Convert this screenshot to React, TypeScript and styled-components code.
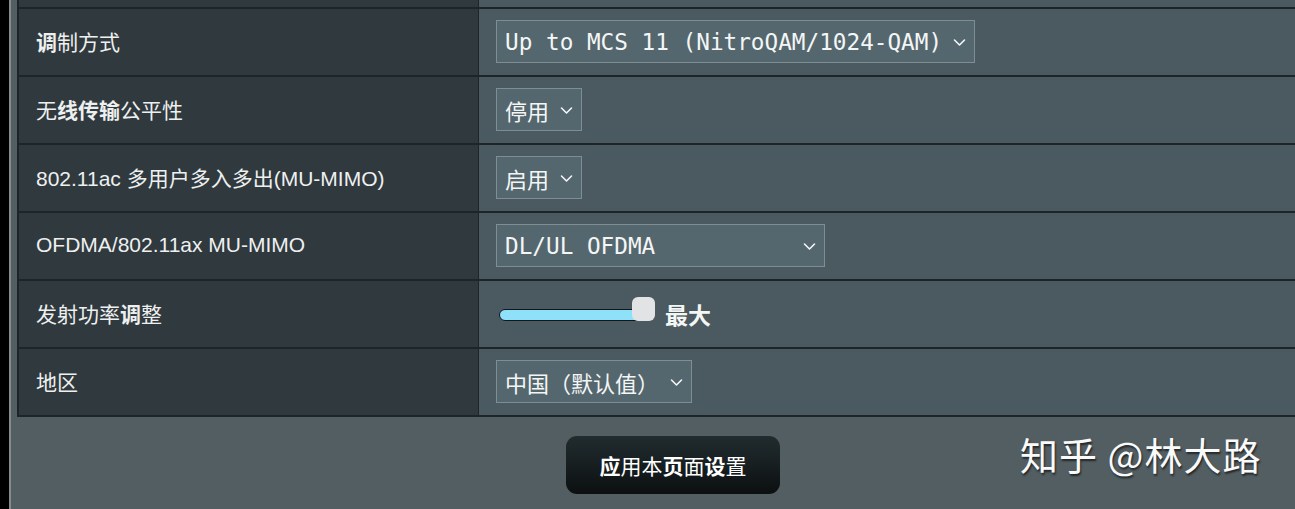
import React from "react";
import styled, { createGlobalStyle } from "styled-components";

const GlobalStyle = createGlobalStyle`
  html, body {
    margin: 0;
    padding: 0;
    background: #000;
    overflow: hidden;
  }
  body {
    font-family: "Liberation Sans", "Noto Sans CJK SC", sans-serif;
    color: #eef0f0;
  }
`;

const Page = styled.div`
  position: relative;
  width: 1295px;
  height: 509px;
  background: #000;
  padding-left: 9px;
  box-sizing: border-box;
`;

const Panel = styled.div`
  height: 100%;
  background: #535e62;
  border-left: 2px solid #838d90;
  padding-left: 6px;
  box-sizing: border-box;
`;

const Table = styled.div`
  display: grid;
  grid-template-columns: 460px 1fr;
  border-left: 2px solid #1d2528;
`;

const Label = styled.div<{ $top?: boolean }>`
  box-sizing: border-box;
  height: ${(p) => (p.$top ? 9 : 68)}px;
  border-bottom: 2px solid #1d2528;
  border-right: 1px solid #1d2528;
  background: #2f393e;
  display: flex;
  align-items: center;
  padding-left: 17px;
  padding-bottom: ${(p) => (p.$top ? 0 : 3)}px;
  font-size: 21px;
  color: #eef0f0;
  font-family: "Liberation Sans", "Noto Sans CJK SC", sans-serif;
`;

const Value = styled.div<{ $top?: boolean }>`
  box-sizing: border-box;
  height: ${(p) => (p.$top ? 9 : 68)}px;
  border-bottom: 2px solid #1d2528;
  background: #4a5a60;
  display: flex;
  align-items: center;
  padding-left: 17px;
  padding-bottom: ${(p) => (p.$top ? 0 : 1)}px;
`;

const Select = styled.div<{ $width?: number; $mono?: boolean }>`
  height: 43px;
  box-sizing: border-box;
  ${(p) => (p.$width ? `width: ${p.$width}px;` : "")}
  display: flex;
  align-items: center;
  justify-content: space-between;
  gap: 10px;
  padding: 0 7px 0 8px;
  background: #55676e;
  border: 1px solid #7e8e93;
  color: #f4f6f6;
  font-size: ${(p) => (p.$mono ? 22.7 : 22)}px;
  font-family: ${(p) =>
    p.$mono
      ? `"DejaVu Sans Mono", "Liberation Mono", monospace`
      : `"Noto Sans CJK SC", sans-serif`};
  white-space: nowrap;
`;

const Chevron = () => (
  <svg width="15" height="10" viewBox="0 0 15 10">
    <path
      d="M2.5 3 L7.5 8 L12.5 3"
      fill="none"
      stroke="#f4f6f6"
      strokeWidth="1.6"
      strokeLinecap="round"
      strokeLinejoin="round"
    />
  </svg>
);

const SliderWrap = styled.div`
  display: flex;
  align-items: center;
  padding-left: 3px;
`;

const Track = styled.div`
  width: 146px;
  height: 12px;
  box-sizing: border-box;
  border: 1.5px solid #10171a;
  border-radius: 6px;
  background: #8fe1f9;
  margin-top: 2px;
`;

const Thumb = styled.div`
  width: 23px;
  height: 24px;
  margin-left: -13px;
  border-radius: 6px;
  background: #e1e3e5;
  margin-top: -10px;
`;

const SliderText = styled.span`
  margin-left: 10px;
  font-family: "Noto Sans CJK SC", sans-serif;
  font-weight: 700;
  font-size: 23px;
  color: #f4f6f6;
`;

const Footer = styled.div`
  display: flex;
  justify-content: center;
  padding-top: 19px;
  padding-left: 34px;
`;

const ApplyButton = styled.button`
  width: 214px;
  height: 58px;
  border: none;
  border-radius: 11px;
  background: linear-gradient(#212c2f, #0c1011);
  color: #fff;
  font-family: "Noto Sans CJK SC", sans-serif;
  font-size: 21px;
  font-weight: 400;
  cursor: pointer;
`;

const Watermark = styled.div`
  position: absolute;
  left: 1020px;
  top: 426px;
  font-family: "Noto Sans CJK SC", sans-serif;
  font-size: 38px;
  color: #fafafa;
  text-shadow: 1px 2px 2px rgba(0, 0, 0, 0.6);
  letter-spacing: 1px;
`;

const Bold = styled.b`
  font-weight: 700;
`;

export default function App() {
  return (
    <Page>
      <GlobalStyle />
      <Panel>
        <Table>
          <Label $top />
          <Value $top />

          <Label>
            <Bold>调</Bold>制方式
          </Label>
          <Value>
            <Select $mono>
              Up to MCS 11 (NitroQAM/1024-QAM)
              <Chevron />
            </Select>
          </Value>

          <Label>
            无<Bold>线传输</Bold>公平性
          </Label>
          <Value>
            <Select>
              停用
              <Chevron />
            </Select>
          </Value>

          <Label>802.11ac 多用户多入多出(MU-MIMO)</Label>
          <Value>
            <Select>
              启用
              <Chevron />
            </Select>
          </Value>

          <Label>OFDMA/802.11ax MU-MIMO</Label>
          <Value>
            <Select $mono $width={329}>
              DL/UL OFDMA
              <Chevron />
            </Select>
          </Value>

          <Label>
            发射功率<Bold>调</Bold>整
          </Label>
          <Value>
            <SliderWrap>
              <Track />
              <Thumb />
              <SliderText>最大</SliderText>
            </SliderWrap>
          </Value>

          <Label>地区</Label>
          <Value>
            <Select>
              中国（默认值）
              <Chevron />
            </Select>
          </Value>
        </Table>
        <Footer>
          <ApplyButton>
            <Bold>应</Bold>用本<Bold>页</Bold>面<Bold>设</Bold>置
          </ApplyButton>
        </Footer>
      </Panel>
      <Watermark>知乎 @林大路</Watermark>
    </Page>
  );
}
